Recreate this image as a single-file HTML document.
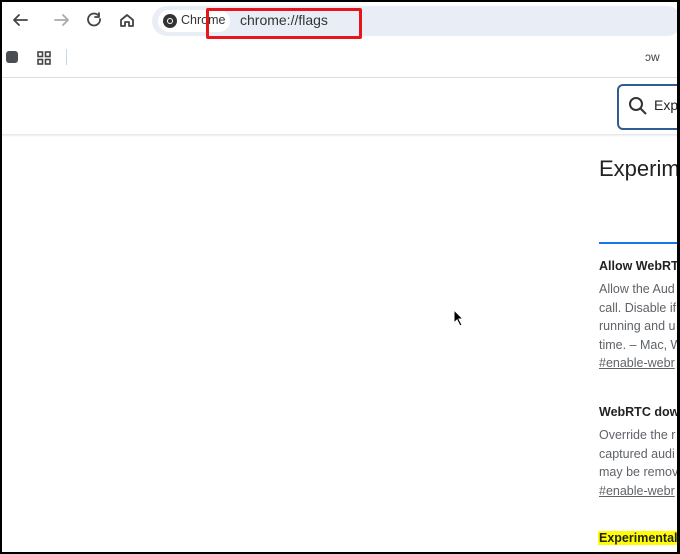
<html><head><style>
body{margin:0;width:680px;height:554px;background:#000;position:relative;overflow:hidden;font-family:"Liberation Sans",sans-serif}
#w{position:absolute;left:2px;top:2px;width:675px;height:550px;background:#fff;overflow:hidden}
.a{position:absolute;white-space:nowrap}
.p{font-size:12.5px;color:#5f6368;line-height:18.5px}
.l{text-decoration:underline;color:#5f6368}
</style></head><body><div id="w">
<svg class="a" style="left:8px;top:8px" width="140" height="22" fill="none" stroke-width="1.8" stroke-linecap="round" stroke-linejoin="round">
<path d="M17 10H4M9 5 4 10l5 5" stroke="#444"/>
<path d="M45 10h13M53 5l5 5-5 5" stroke="#aaa"/>
<path d="M88 5a6 6 0 1 0 2 4M89 3v4h-4" stroke="#444"/>
<path d="M111 10l6-5 6 5v6h-4v-4h-4v4h-4z" stroke="#444"/>
</svg>
<div class="a" style="left:150px;top:4px;width:530px;height:30px;border-radius:15px;background:#e9eef6"></div>
<div class="a" style="left:156px;top:8px;width:72px;height:22px;border-radius:11px;background:#fff"></div>
<svg class="a" style="left:160px;top:11px" width="16" height="16"><circle cx="8" cy="8" r="7" fill="#333"/><circle cx="8" cy="8" r="3" fill="#fff"/><circle cx="8" cy="8" r="2" fill="#333"/></svg>
<div class="a" style="left:179px;top:11px;font-size:12.5px;color:#333">Chrome</div>
<div class="a" style="left:238px;top:10px;font-size:14px;color:#333">chrome://flags</div>
<div class="a" style="left:204px;top:6px;width:150px;height:25px;border:3px solid #e8141c;border-radius:2px"></div>
<div class="a" style="left:4px;top:49px;width:12px;height:12px;border-radius:3px;background:#4a4d52"></div>
<svg class="a" style="left:35px;top:49px" width="14" height="14" fill="none" stroke="#444" stroke-width="1.6"><rect x="1" y="1" width="4.5" height="4.5"/><rect x="8.5" y="1" width="4.5" height="4.5"/><rect x="1" y="8.5" width="4.5" height="4.5"/><rect x="8.5" y="8.5" width="4.5" height="4.5"/></svg>
<div class="a" style="left:64px;top:47px;width:1px;height:16px;background:#c8d6ea"></div>
<div class="a" style="left:643px;top:48px;font-size:12px;color:#444">ɔw</div>
<div class="a" style="left:0;top:75px;width:680px;height:1px;background:#ddd"></div>
<div class="a" style="left:0;top:132px;width:680px;height:3px;background:linear-gradient(#e4e4e4,#fff)"></div>
<div class="a" style="left:615px;top:82px;width:80px;height:42px;border:2px solid #2e5d8e;border-radius:6px"></div>
<svg class="a" style="left:626px;top:94px" width="20" height="20" fill="none" stroke="#333" stroke-width="2"><circle cx="8" cy="8" r="6"/><path d="M12.5 12.5 18 18"/></svg>
<div class="a" style="left:652px;top:95px;font-size:14px;color:#222">Exp</div>
<div class="a" style="left:597px;top:154px;font-size:22px;color:#222">Experim</div>
<div class="a" style="left:597px;top:240px;width:90px;height:2px;background:#1a73e8"></div>
<div class="a" style="left:597px;top:257px;font-size:12.5px;font-weight:bold;color:#222">Allow WebRTC</div>
<div class="a p" style="left:597px;top:278px">Allow the Aud<br>call. Disable if<br>running and u<br>time. – Mac, W<br><span class="l">#enable-webr</span></div>
<div class="a" style="left:597px;top:403px;font-size:12.5px;font-weight:bold;color:#222">WebRTC dow</div>
<div class="a p" style="left:597px;top:424px">Override the r<br>captured audi<br>may be remov<br><span class="l">#enable-webr</span></div>
<div class="a" style="left:596px;top:529px;font-size:12.5px;font-weight:bold;color:#222;background:#ffff00;padding:0 1px">Experimental</div>
<svg class="a" style="left:451px;top:307px" width="12" height="18"><path d="M1 1v13l3-3 3 6 2-1-3-6h4z" fill="#000" stroke="#fff" stroke-width="1"/></svg>
</div></body></html>
